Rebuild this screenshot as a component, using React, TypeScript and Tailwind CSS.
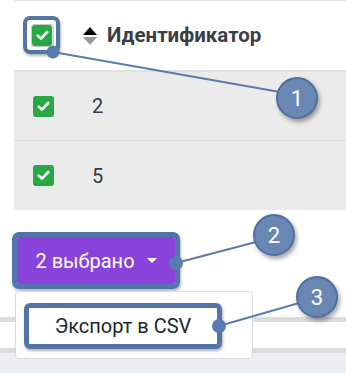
import React from "react";

function Check({ className = "" }: { className?: string }) {
  return (
    <div className={`flex items-center justify-center rounded-[3px] bg-[#28a745] ${className}`}>
      <svg width="13" height="11" viewBox="0 0 13 11" fill="none">
        <path d="M1.8 5.6 L5 8.6 L11.2 2" stroke="white" strokeWidth="2.6" strokeLinecap="round" strokeLinejoin="round" />
      </svg>
    </div>
  );
}

function Bubble({ n, x, y }: { n: string; x: number; y: number }) {
  return (
    <div
      className="absolute flex h-[42px] w-[42px] items-center justify-center rounded-full border-2 border-[#4d6fa3] bg-[#6a87b4] text-[22px] text-white shadow-[2px_3px_4px_rgba(0,0,0,0.35)]"
      style={{ left: x - 21, top: y - 21, fontFamily: "Roboto, sans-serif" }}
    >
      {n}
    </div>
  );
}

export default function App() {
  return (
    <div
      className="relative h-[373px] w-[346px] overflow-hidden bg-white text-[#343a40]"
      style={{ fontFamily: "Roboto, 'Liberation Sans', sans-serif" }}
    >
      {/* Table */}
      <div className="ml-[14px]">
        <div className="flex h-[72px] items-center border-t border-b-2 border-[#dee2e6] bg-white">
          <div className="relative ml-[18px] h-[21px] w-[21px]">
            <div className="absolute left-[-9px] top-[-9px] h-[38px] w-[37px] rounded-[7px] border-[4px] border-[#5274a9] shadow-[1px_2px_3px_rgba(0,0,0,0.3)]" />
            <div className="absolute left-[-1px] top-[-1px] h-[23px] w-[23px] rounded-[3px] border border-[#c8c8c8] bg-[#e8e8e8]" />
            <Check className="absolute left-0 top-0 h-[21px] w-[20px]" />
          </div>
          <div className="ml-[30px] flex flex-col items-center gap-[2px]">
            <div className="h-0 w-0 border-x-[7px] border-b-[8px] border-x-transparent border-b-black" />
            <div className="h-0 w-0 border-x-[7px] border-t-[8px] border-x-transparent border-t-[#9a9a9a]" />
          </div>
          <div className="ml-[10px] text-[20.5px] font-bold text-[#3b3f45]">Идентификатор</div>
        </div>
        <div className="flex h-[69px] items-center border-b border-[#dcdcdc] bg-[#ebebeb]">
          <Check className="ml-[19px] h-[21px] w-[21px]" />
          <div className="ml-[38px] text-[20px] text-[#343a40]">2</div>
        </div>
        <div className="flex h-[69px] items-center bg-[#ebebeb]">
          <Check className="ml-[19px] h-[21px] w-[21px]" />
          <div className="ml-[38px] text-[20px] text-[#343a40]">5</div>
        </div>
      </div>

      {/* Button */}
      <div className="ml-[12px] mt-[22px] h-[57px] w-[168px] rounded-[7px] border-[5px] border-[#5274a9] shadow-[1px_2px_3px_rgba(0,0,0,0.3)]">
        <div className="flex h-full w-full items-center justify-center gap-[12px] rounded-[2px] bg-[#8a43da] text-[20px] text-white">
          <span>2 выбрано</span>
          <div className="h-0 w-0 border-x-[5px] border-t-[5px] border-x-transparent border-t-white" />
        </div>
      </div>

      {/* Lower area */}
      <div className="mt-[28px] h-[5px] bg-[#dcdcdc]" />
      <div className="h-[26px] bg-white" />
      <div className="h-[5px] bg-[#dadada]" />
      <div className="h-[30px] bg-[#eceef2]" />

      {/* Dropdown menu */}
      <div className="absolute left-[15px] top-[291px] flex h-[68px] w-[238px] items-start rounded-[4px] border border-[#d8d8d8] bg-white">
        <div className="ml-[8px] mt-[11px] flex h-[46px] w-[198px] items-center justify-center rounded-[6px] border-[5px] border-[#5274a9] bg-white text-[20px] text-[#212529] shadow-[1px_2px_3px_rgba(0,0,0,0.3)]">
          Экспорт в CSV
        </div>
      </div>

      {/* Callout lines */}
      <svg className="pointer-events-none absolute left-0 top-0" width="346" height="373">
        <line x1="53" y1="52" x2="280" y2="92" stroke="#5a7bb0" strokeWidth="2" />
        <line x1="176" y1="263" x2="256" y2="242" stroke="#5a7bb0" strokeWidth="2" />
        <line x1="219" y1="326" x2="299" y2="303" stroke="#5a7bb0" strokeWidth="2" />
        <circle cx="53" cy="52" r="6.5" fill="#5a7bb0" />
        <circle cx="176" cy="263" r="7" fill="#5a7bb0" />
        <circle cx="219" cy="326" r="7" fill="#5a7bb0" />
      </svg>
      <Bubble n="1" x={297} y={98} />
      <Bubble n="2" x={274} y={235} />
      <Bubble n="3" x={317} y={297} />
    </div>
  );
}
